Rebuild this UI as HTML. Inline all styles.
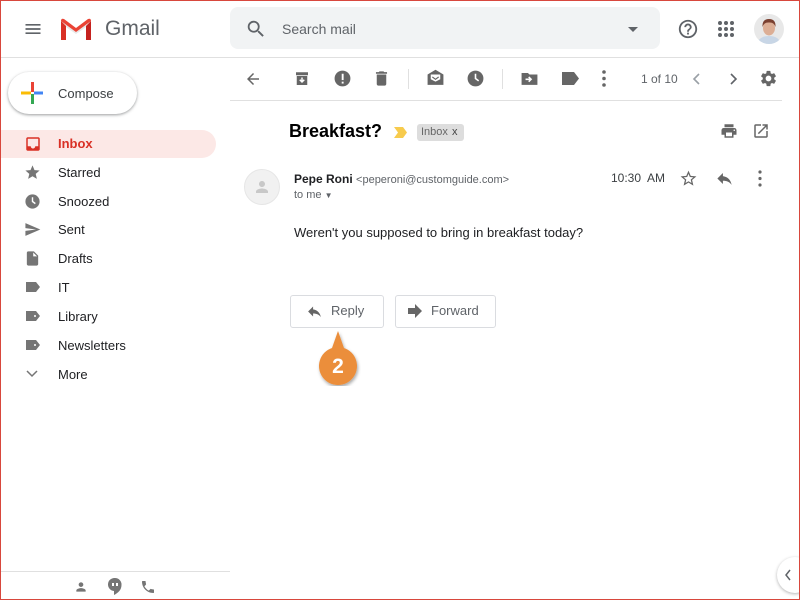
<!DOCTYPE html>
<html><head><meta charset="utf-8"><style>
*{box-sizing:border-box;margin:0;padding:0}
body{width:800px;height:600px;overflow:hidden;background:#fff;font-family:"Liberation Sans",Arial,sans-serif;position:relative;color:#202124}
.frame{position:absolute;left:0;top:0;width:800px;height:600px;border:1px solid #d8473d;pointer-events:none;z-index:10}
.abs{position:absolute}
.nav{position:absolute;left:58px;font-size:13px;color:#202124;line-height:16px}
.ic{position:absolute}
svg{display:block}
</style></head><body>
<div class="frame"></div>
<!-- header -->
<svg class="ic" style="left:23px;top:19px" width="20" height="20" viewBox="0 0 24 24"><path d="M3 18h18v-2H3v2zm0-5h18v-2H3v2zm0-7v2h18V6H3z" fill="#5f6368"/></svg>
<svg class="ic" style="left:59px;top:17px" width="34" height="25" viewBox="0 0 34 25"><path d="M2 3 L17 14 L32 3 V23 H27 V10 L17 17 L7 10 V23 H2Z" fill="#e8e8e8"/><path d="M2 4 V23 H7 V9 Z" fill="#d93025"/><path d="M32 4 V23 H27 V9 Z" fill="#c5221f"/><path d="M2 4 Q2 1 5 2 L17 11 L29 2 Q32 1 32 4 L17 15 Z" fill="#ea4335"/></svg>
<div class="abs" style="left:105px;top:17px;font-size:21px;color:#5f6368">Gmail</div>
<div class="abs" style="left:230px;top:7px;width:430px;height:42px;background:#f1f3f4;border-radius:8px"></div>
<svg class="ic" style="left:245px;top:18px" width="22" height="22" viewBox="0 0 24 24"><path d="M15.5 14h-.79l-.28-.27A6.470 6.470 0 0016 9.5 6.5 6.5 0 109.5 16c1.61 0 3.09-.59 4.23-1.57l.27.28v.79l5 4.99L20.49 19l-4.990-5zm-6 0C7.01 14 5 11.99 5 9.5S7.01 5 9.5 5 14 7.01 14 9.5 11.99 14 9.5 14z" fill="#5f6368"/></svg>
<div class="abs" style="left:282px;top:21px;font-size:14px;color:#5f6368">Search mail</div>
<div class="abs" style="left:628px;top:27px;border-left:5px solid transparent;border-right:5px solid transparent;border-top:5px solid #5f6368"></div>
<svg class="ic" style="left:677px;top:18px" width="22" height="22" viewBox="0 0 24 24"><path d="M11 18h2v-2h-2v2zm1-16C6.48 2 2 6.48 2 12s4.48 10 10 10 10-4.48 10-10S17.52 2 12 2zm0 18c-4.41 0-8-3.59-8-8s3.59-8 8-8 8 3.59 8 8-3.59 8-8 8zm0-14c-2.21 0-4 1.79-4 4h2c0-1.1.9-2 2-2s2 .9 2 2c0 2-3 1.75-3 5h2c0-2.25 3-2.5 3-5 0-2.21-1.79-4-4-4z" fill="#5f6368"/></svg>
<svg class="ic" style="left:717px;top:20px" width="18" height="18" viewBox="0 0 18 18" fill="#5f6368"><circle cx="3" cy="3" r="2"/><circle cx="9" cy="3" r="2"/><circle cx="15" cy="3" r="2"/><circle cx="3" cy="9" r="2"/><circle cx="9" cy="9" r="2"/><circle cx="15" cy="9" r="2"/><circle cx="3" cy="15" r="2"/><circle cx="9" cy="15" r="2"/><circle cx="15" cy="15" r="2"/></svg>
<svg class="ic" style="left:754px;top:14px" width="30" height="30" viewBox="0 0 30 30"><defs><clipPath id="c"><circle cx="15" cy="15" r="15"/></clipPath></defs><g clip-path="url(#c)"><rect width="30" height="30" fill="#e8e8e8"/><path d="M3 30 Q5 22 15 22 Q25 22 27 30Z" fill="#c8d6e6"/><ellipse cx="15" cy="14" rx="6" ry="7.5" fill="#dcae95"/><path d="M8.5 13 Q8 5 15 5 Q22 5 21.5 13 Q20 8 15 8.5 Q10 8 8.5 13Z" fill="#7a4030"/></g></svg>
<div class="abs" style="left:0;top:57px;width:800px;height:1px;background:#e0e0e0"></div>
<!-- sidebar -->
<div class="abs" style="left:8px;top:72px;width:129px;height:42px;border-radius:21px;background:#fff;box-shadow:0 1px 3px rgba(60,64,67,.35),0 1px 2px rgba(60,64,67,.2)"></div>
<svg class="ic" style="left:21px;top:82px" width="22" height="22" viewBox="0 0 22 22"><rect x="10" y="0" width="3" height="10" fill="#ea4335"/><rect x="13" y="9.5" width="10" height="3" fill="#4285f4"/><rect x="10" y="12" width="3" height="10" fill="#34a853"/><rect x="0" y="9.5" width="10" height="3" fill="#fbbc04"/></svg>
<div class="abs" style="left:58px;top:86px;font-size:13px;color:#3c4043">Compose</div>
<div class="abs" style="left:0;top:130px;width:216px;height:28px;background:#fce8e6;border-radius:0 14px 14px 0"></div>
<svg class="ic" style="left:24px;top:135px" width="18" height="18" viewBox="0 0 24 24"><path d="M19 3H4.99C3.88 3 3 3.9 3 5v14c0 1.1.88 2 1.99 2H19c1.1 0 2-.9 2-2V5c0-1.1-.9-2-2-2zm0 12h-4c0 1.66-1.35 3-3 3s-3-1.34-3-3H4.99V5H19v10z" fill="#d93025"/></svg>
<div class="nav" style="top:136px;color:#d93025;font-weight:bold">Inbox</div>
<svg class="ic" style="left:24px;top:164px" width="17" height="17" viewBox="0 0 24 24"><path d="M12 17.27L18.18 21l-1.64-7.03L22 9.24l-7.19-.61L12 2 9.19 8.63 2 9.24l5.46 4.73L5.82 21z" fill="#757575"/></svg>
<div class="nav" style="top:165px">Starred</div>
<svg class="ic" style="left:24px;top:193px" width="17" height="17" viewBox="0 0 24 24"><circle cx="12" cy="12" r="10" fill="#757575"/><path d="M12 6v6l4 3" stroke="#fff" stroke-width="2" fill="none"/></svg>
<div class="nav" style="top:194px">Snoozed</div>
<svg class="ic" style="left:24px;top:221px" width="17" height="17" viewBox="0 0 24 24"><path d="M2.01 21L23 12 2.01 3 2 10l15 2-15 2z" fill="#757575"/></svg>
<div class="nav" style="top:222px">Sent</div>
<svg class="ic" style="left:24px;top:250px" width="17" height="17" viewBox="0 0 24 24"><path d="M6 2c-1.1 0-2 .9-2 2v16c0 1.1.9 2 2 2h12c1.1 0 2-.9 2-2V8l-6-6H6zm7 7V3.5L18.5 9H13z" fill="#757575"/></svg>
<div class="nav" style="top:251px">Drafts</div>
<svg class="ic" style="left:25px;top:281px" width="16" height="12" viewBox="0 0 16 12"><path d="M1 1h10l4 5-4 5H1z" fill="#757575"/></svg>
<div class="nav" style="top:280px">IT</div>
<svg class="ic" style="left:25px;top:310px" width="16" height="12" viewBox="0 0 16 12"><path d="M1 1h10l4 5-4 5H1z" fill="#757575"/><circle cx="10" cy="6" r="1" fill="#fff"/></svg>
<div class="nav" style="top:309px">Library</div>
<svg class="ic" style="left:25px;top:339px" width="16" height="12" viewBox="0 0 16 12"><path d="M1 1h10l4 5-4 5H1z" fill="#757575"/><circle cx="10" cy="6" r="1" fill="#fff"/></svg>
<div class="nav" style="top:338px">Newsletters</div>
<svg class="ic" style="left:25px;top:369px" width="14" height="10" viewBox="0 0 14 10"><path d="M2 2l5 5 5-5" stroke="#757575" stroke-width="1.5" fill="none"/></svg>
<div class="nav" style="top:367px">More</div>
<div class="abs" style="left:0;top:571px;width:230px;height:1px;background:#e0e0e0"></div>
<svg class="ic" style="left:74px;top:580px" width="14" height="14" viewBox="0 0 24 24"><path d="M12 12c2.21 0 4-1.79 4-4s-1.79-4-4-4-4 1.79-4 4 1.79 4 4 4zm0 2c-2.67 0-8 1.34-8 4v2h16v-2c0-2.660-5.33-4-8-4z" fill="#757575"/></svg>
<svg class="ic" style="left:108px;top:578px" width="14" height="17" viewBox="0 0 14 17"><path d="M7 0a6.5 6.5 0 00-1 13v4c4-2 7.5-5 7.5-10A6.5 6.5 0 007 0z" fill="#757575"/><rect x="4" y="5" width="2" height="3" fill="#fff"/><rect x="8" y="5" width="2" height="3" fill="#fff"/></svg>
<svg class="ic" style="left:140px;top:579px" width="16" height="16" viewBox="0 0 24 24"><path d="M6.62 10.79c1.44 2.83 3.76 5.14 6.59 6.59l2.2-2.2c.27-.27.67-.36 1.02-.24 1.12.37 2.33.57 3.57.57.55 0 1 .45 1 1V20c0 .55-.45 1-1 1-9.39 0-17-7.61-17-17 0-.55.45-1 1-1h3.5c.55 0 1 .45 1 1 0 1.25.2 2.45.57 3.570.11.35.03.74-.25 1.02l-2.2 2.2z" fill="#757575"/></svg>
<!-- toolbar -->
<svg class="ic" style="left:244px;top:70px" width="18" height="18" viewBox="0 0 24 24"><path d="M20 11H7.83l5.59-5.59L12 4l-8 8 8 8 1.41-1.41L7.83 13H20v-2z" fill="#666"/></svg>
<svg class="ic" style="left:293px;top:70px" width="18" height="18" viewBox="0 0 24 24"><path d="M4 3h16v4H4z M5 8h14v12H5z" fill="#666"/><path d="M12 10v6 M9 13l3 3 3-3" stroke="#fff" stroke-width="2" fill="none"/></svg>
<svg class="ic" style="left:333px;top:69px" width="19" height="19" viewBox="0 0 24 24"><circle cx="12" cy="12" r="10" fill="#666"/><rect x="11" y="6" width="2.4" height="8" fill="#fff"/><rect x="11" y="16" width="2.4" height="2.4" fill="#fff"/></svg>
<svg class="ic" style="left:372px;top:69px" width="19" height="19" viewBox="0 0 24 24"><path d="M6 19c0 1.1.9 2 2 2h8c1.1 0 2-.9 2-2V7H6v12zM19 4h-3.5l-1-1h-5l-1 1H5v2h14V4z" fill="#666"/></svg>
<div class="abs" style="left:408px;top:69px;width:1px;height:20px;background:#e0e0e0"></div>
<svg class="ic" style="left:426px;top:69px" width="19" height="19" viewBox="0 0 24 24"><path d="M12 1L2 7v13h20V7z" fill="#666"/><path d="M6 7h12v6l-6 3-6-3z" fill="#fff"/><path d="M8 10l4 3 4-3" stroke="#666" stroke-width="1.5" fill="none"/></svg>
<svg class="ic" style="left:466px;top:69px" width="19" height="19" viewBox="0 0 24 24"><circle cx="12" cy="12" r="10" fill="#666"/><path d="M12 6v6l4 3" stroke="#fff" stroke-width="2" fill="none"/></svg>
<div class="abs" style="left:502px;top:69px;width:1px;height:20px;background:#e0e0e0"></div>
<svg class="ic" style="left:520px;top:69px" width="19" height="19" viewBox="0 0 24 24"><path d="M2 5h8l2 2h10v13H2z" fill="#666"/><path d="M7 13h7 M11 10l3 3-3 3" stroke="#fff" stroke-width="2" fill="none"/></svg>
<svg class="ic" style="left:561px;top:70px" width="19" height="17" viewBox="0 0 19 17"><path d="M1 2h12l5 6.5-5 6.5H1z" fill="#666"/></svg>
<svg class="ic" style="left:597px;top:69px" width="14" height="19" viewBox="0 0 14 19" fill="#666"><circle cx="7" cy="3" r="1.8"/><circle cx="7" cy="9.5" r="1.8"/><circle cx="7" cy="16" r="1.8"/></svg>
<div class="abs" style="left:641px;top:72px;font-size:12px;color:#5f6368">1 of 10</div>
<svg class="ic" style="left:691px;top:72px" width="12" height="14" viewBox="0 0 12 14"><path d="M8 2L3 7l5 5" stroke="#9aa0a6" stroke-width="1.6" fill="none"/></svg>
<svg class="ic" style="left:727px;top:72px" width="12" height="14" viewBox="0 0 12 14"><path d="M4 2l5 5-5 5" stroke="#5f6368" stroke-width="1.6" fill="none"/></svg>
<svg class="ic" style="left:759px;top:69px" width="19" height="19" viewBox="0 0 24 24"><path d="M19.14 12.94c.04-.3.06-.61.06-.94 0-.32-.02-.64-.07-.94l2.03-1.58a.49.49 0 00.12-.61l-1.92-3.32a.488.488 0 00-.59-.22l-2.39.96c-.5-.38-1.03-.7-1.62-.94l-.36-2.54a.484.484 0 00-.48-.41h-3.84c-.24 0-.43.17-.47.41l-.36 2.54c-.59.24-1.13.57-1.62.94l-2.39-.96c-.22-.08-.47 0-.59.22L2.74 8.87c-.12.21-.08.47.12.61l2.03 1.58c-.05.3-.09.63-.09.94s.02.64.07.94l-2.03 1.58a.49.49 0 00-.12.61l1.92 3.32c.12.22.37.29.59.22l2.39-.96c.5.38 1.03.7 1.62.94l.36 2.54c.05.24.24.41.48.41h3.84c.24 0 .44-.17.47-.41l.36-2.54c.59-.24 1.13-.56 1.62-.94l2.39.96c.22.08.47 0 .59-.22l1.920-3.32c.12-.22.07-.47-.12-.61l-2.01-1.58zM12 15.6c-1.98 0-3.6-1.62-3.6-3.6s1.62-3.6 3.6-3.6 3.6 1.62 3.6 3.6-1.62 3.6-3.6 3.6z" fill="#666"/></svg>
<div class="abs" style="left:230px;top:100px;width:552px;height:1px;background:#e0e0e0"></div>
<!-- subject -->
<div class="abs" style="left:289px;top:121px;font-size:18px;font-weight:bold;color:#000">Breakfast?</div>
<svg class="ic" style="left:394px;top:127px" width="14" height="11" viewBox="0 0 14 11"><path d="M0 0h9l4 5.5-4 5.5H0l4-5.5z" fill="#f7cb4d"/></svg>
<div class="abs" style="left:417px;top:124px;width:47px;height:17px;background:#ddd;border-radius:3px;font-size:11px;color:#666;padding:2px 0 0 4px">Inbox <span style="font-size:11px;color:#444;margin-left:1px">x</span></div>
<svg class="ic" style="left:720px;top:122px" width="18" height="18" viewBox="0 0 24 24"><path d="M19 8H5c-1.66 0-3 1.34-3 3v6h4v4h12v-4h4v-6c0-1.66-1.34-3-3-3zm-3 11H8v-5h8v5zm3-7c-.55 0-1-.45-1-1s.45-1 1-1 1 .45 1 1-.45 1-1 1zm-1-9H6v4h12V3z" fill="#666"/></svg>
<svg class="ic" style="left:752px;top:122px" width="18" height="18" viewBox="0 0 24 24"><path d="M19 19H5V5h7V3H5a2 2 0 00-2 2v14a2 2 0 002 2h14c1.1 0 2-.9 2-2v-7h-2v7zM14 3v2h3.59l-9.83 9.83 1.41 1.41L19 6.41V10h2V3h-7z" fill="#666"/></svg>
<!-- message -->
<div class="abs" style="left:244px;top:169px;width:36px;height:36px;border-radius:50%;background:#f1f1f1;border:1px solid #e6e6e6"></div>
<svg class="ic" style="left:253px;top:178px" width="18" height="18" viewBox="0 0 24 24"><path d="M12 12c2.21 0 4-1.79 4-4s-1.79-4-4-4-4 1.79-4 4 1.79 4 4 4zm0 2c-2.67 0-8 1.34-8 4v2h16v-2c0-2.66-5.33-4-8-4z" fill="#c8c8c8"/></svg>
<div class="abs" style="left:294px;top:172px;font-size:12px;color:#202124"><b>Pepe Roni</b> <span style="font-size:11px;color:#5f6368">&lt;peperoni@customguide.com&gt;</span></div>
<div class="abs" style="left:294px;top:189px;font-size:11px;color:#5f6368">to me <span style="font-size:8px">▼</span></div>
<div class="abs" style="left:611px;top:171px;font-size:12px;color:#3c4043">10:30&nbsp; AM</div>
<svg class="ic" style="left:679px;top:169px" width="19" height="19" viewBox="0 0 24 24"><path d="M22 9.24l-7.19-.62L12 2 9.19 8.63 2 9.24l5.46 4.73L5.82 21 12 17.27 18.18 21l-1.63-7.03L22 9.24zM12 15.4l-3.76 2.27 1-4.28-3.32-2.88 4.38-.38L12 6.1l1.71 4.04 4.38.38-3.32 2.88 1 4.28L12 15.4z" fill="#666"/></svg>
<svg class="ic" style="left:715px;top:169px" width="19" height="19" viewBox="0 0 24 24"><path d="M10 9V5l-7 7 7 7v-4.1c5 0 8.5 1.6 11 5.1-1-5-4-10-11-11z" fill="#666"/></svg>
<svg class="ic" style="left:753px;top:169px" width="14" height="19" viewBox="0 0 14 19" fill="#666"><circle cx="7" cy="3" r="1.6"/><circle cx="7" cy="9.5" r="1.6"/><circle cx="7" cy="16" r="1.6"/></svg>
<div class="abs" style="left:294px;top:225px;font-size:13px;color:#202124">Weren't you supposed to bring in breakfast today?</div>
<!-- buttons -->
<div class="abs" style="left:290px;top:295px;width:94px;height:33px;border:1px solid #dadce0;border-radius:3px"></div>
<svg class="ic" style="left:306px;top:303px" width="17" height="17" viewBox="0 0 24 24"><path d="M10 9V5l-7 7 7 7v-4.1c5 0 8.5 1.6 11 5.1-1-5-4-10-11-11z" fill="#666"/></svg>
<div class="abs" style="left:331px;top:303px;font-size:13px;color:#5f6368">Reply</div>
<div class="abs" style="left:395px;top:295px;width:101px;height:33px;border:1px solid #dadce0;border-radius:3px"></div>
<svg class="ic" style="left:408px;top:304px" width="15" height="14" viewBox="0 0 15 14"><path d="M0 4h7V0l7 7-7 7v-4H0z" fill="#666"/></svg>
<div class="abs" style="left:431px;top:303px;font-size:13px;color:#5f6368">Forward</div>
<!-- badge -->
<svg class="ic" style="left:314px;top:328px" width="50" height="58" viewBox="0 0 50 58"><defs><filter id="s"><feDropShadow dx="1" dy="2" stdDeviation="1.5" flood-opacity=".35"/></filter></defs><path d="M24 3 L30 20 A19 19 0 1 1 18 20 Z" fill="#eb8e3b" filter="url(#s)"/><text x="24" y="45" text-anchor="middle" font-family="Liberation Sans" font-weight="bold" font-size="21" fill="#fff">2</text></svg>
<!-- side toggle -->
<div class="abs" style="left:777px;top:557px;width:36px;height:36px;border-radius:50%;background:#fff;box-shadow:0 1px 3px rgba(0,0,0,.3)"></div>
<svg class="ic" style="left:784px;top:569px" width="8" height="12" viewBox="0 0 8 12"><path d="M6 1L2 6l4 5" stroke="#5f6368" stroke-width="1.5" fill="none"/></svg>
</body></html>
